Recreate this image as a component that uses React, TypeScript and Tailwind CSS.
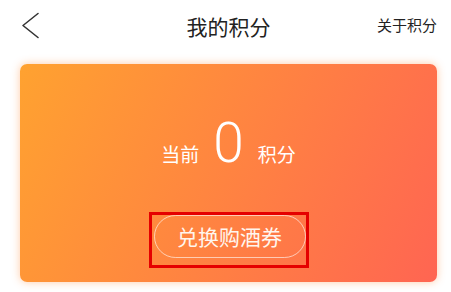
export default function App() {
    return (
        <div
            className="w-[451px] h-[292px] bg-white overflow-hidden"
            style={{ fontFamily: '"Noto Sans CJK SC", "Noto Sans", sans-serif' }}
        >
            {/* Top bar */}
            <div className="relative h-[52px] pl-[6px] flex items-center justify-center">
                <svg className="absolute left-[20px] top-[12px]" width="22" height="28" viewBox="0 0 22 28" fill="none">
                    <polyline points="18,1.5 3,13.5 18,25.5" stroke="#333" strokeWidth="1.6" strokeLinecap="round" strokeLinejoin="round" />
                </svg>
                <span className="text-[21px] text-[#222] leading-none">我的积分</span>
                <span className="absolute right-[14px] top-[17px] text-[15px] text-[#222] leading-none">关于积分</span>
            </div>

            {/* Points card */}
            <div className="ml-[20px] mr-[14px] mt-[12px] h-[218px] rounded-[7px] bg-[linear-gradient(115deg,#ffa230_0%,#ff6552_100%)] shadow-[0_0_8px_rgba(255,140,60,0.45)] flex flex-col items-center">
                <div className="mt-[52px] flex items-baseline text-white">
                    <span className="text-[19px] leading-none">当前</span>
                    <span className="mx-[14px] text-[55px] font-light leading-none" style={{ fontFamily: 'Roboto, sans-serif' }}>0</span>
                    <span className="text-[19px] leading-none">积分</span>
                </div>

                <div className="mt-[41px] border-[3px] border-[#e50000] pl-[2px] pb-[7px]">
                    <button className="w-[152px] h-[43px] rounded-full border border-[#ffffff99] text-[21px] text-[#fff6ee] flex items-center justify-center">
                        兑换购酒券
                    </button>
                </div>
            </div>
        </div>
    );
}
